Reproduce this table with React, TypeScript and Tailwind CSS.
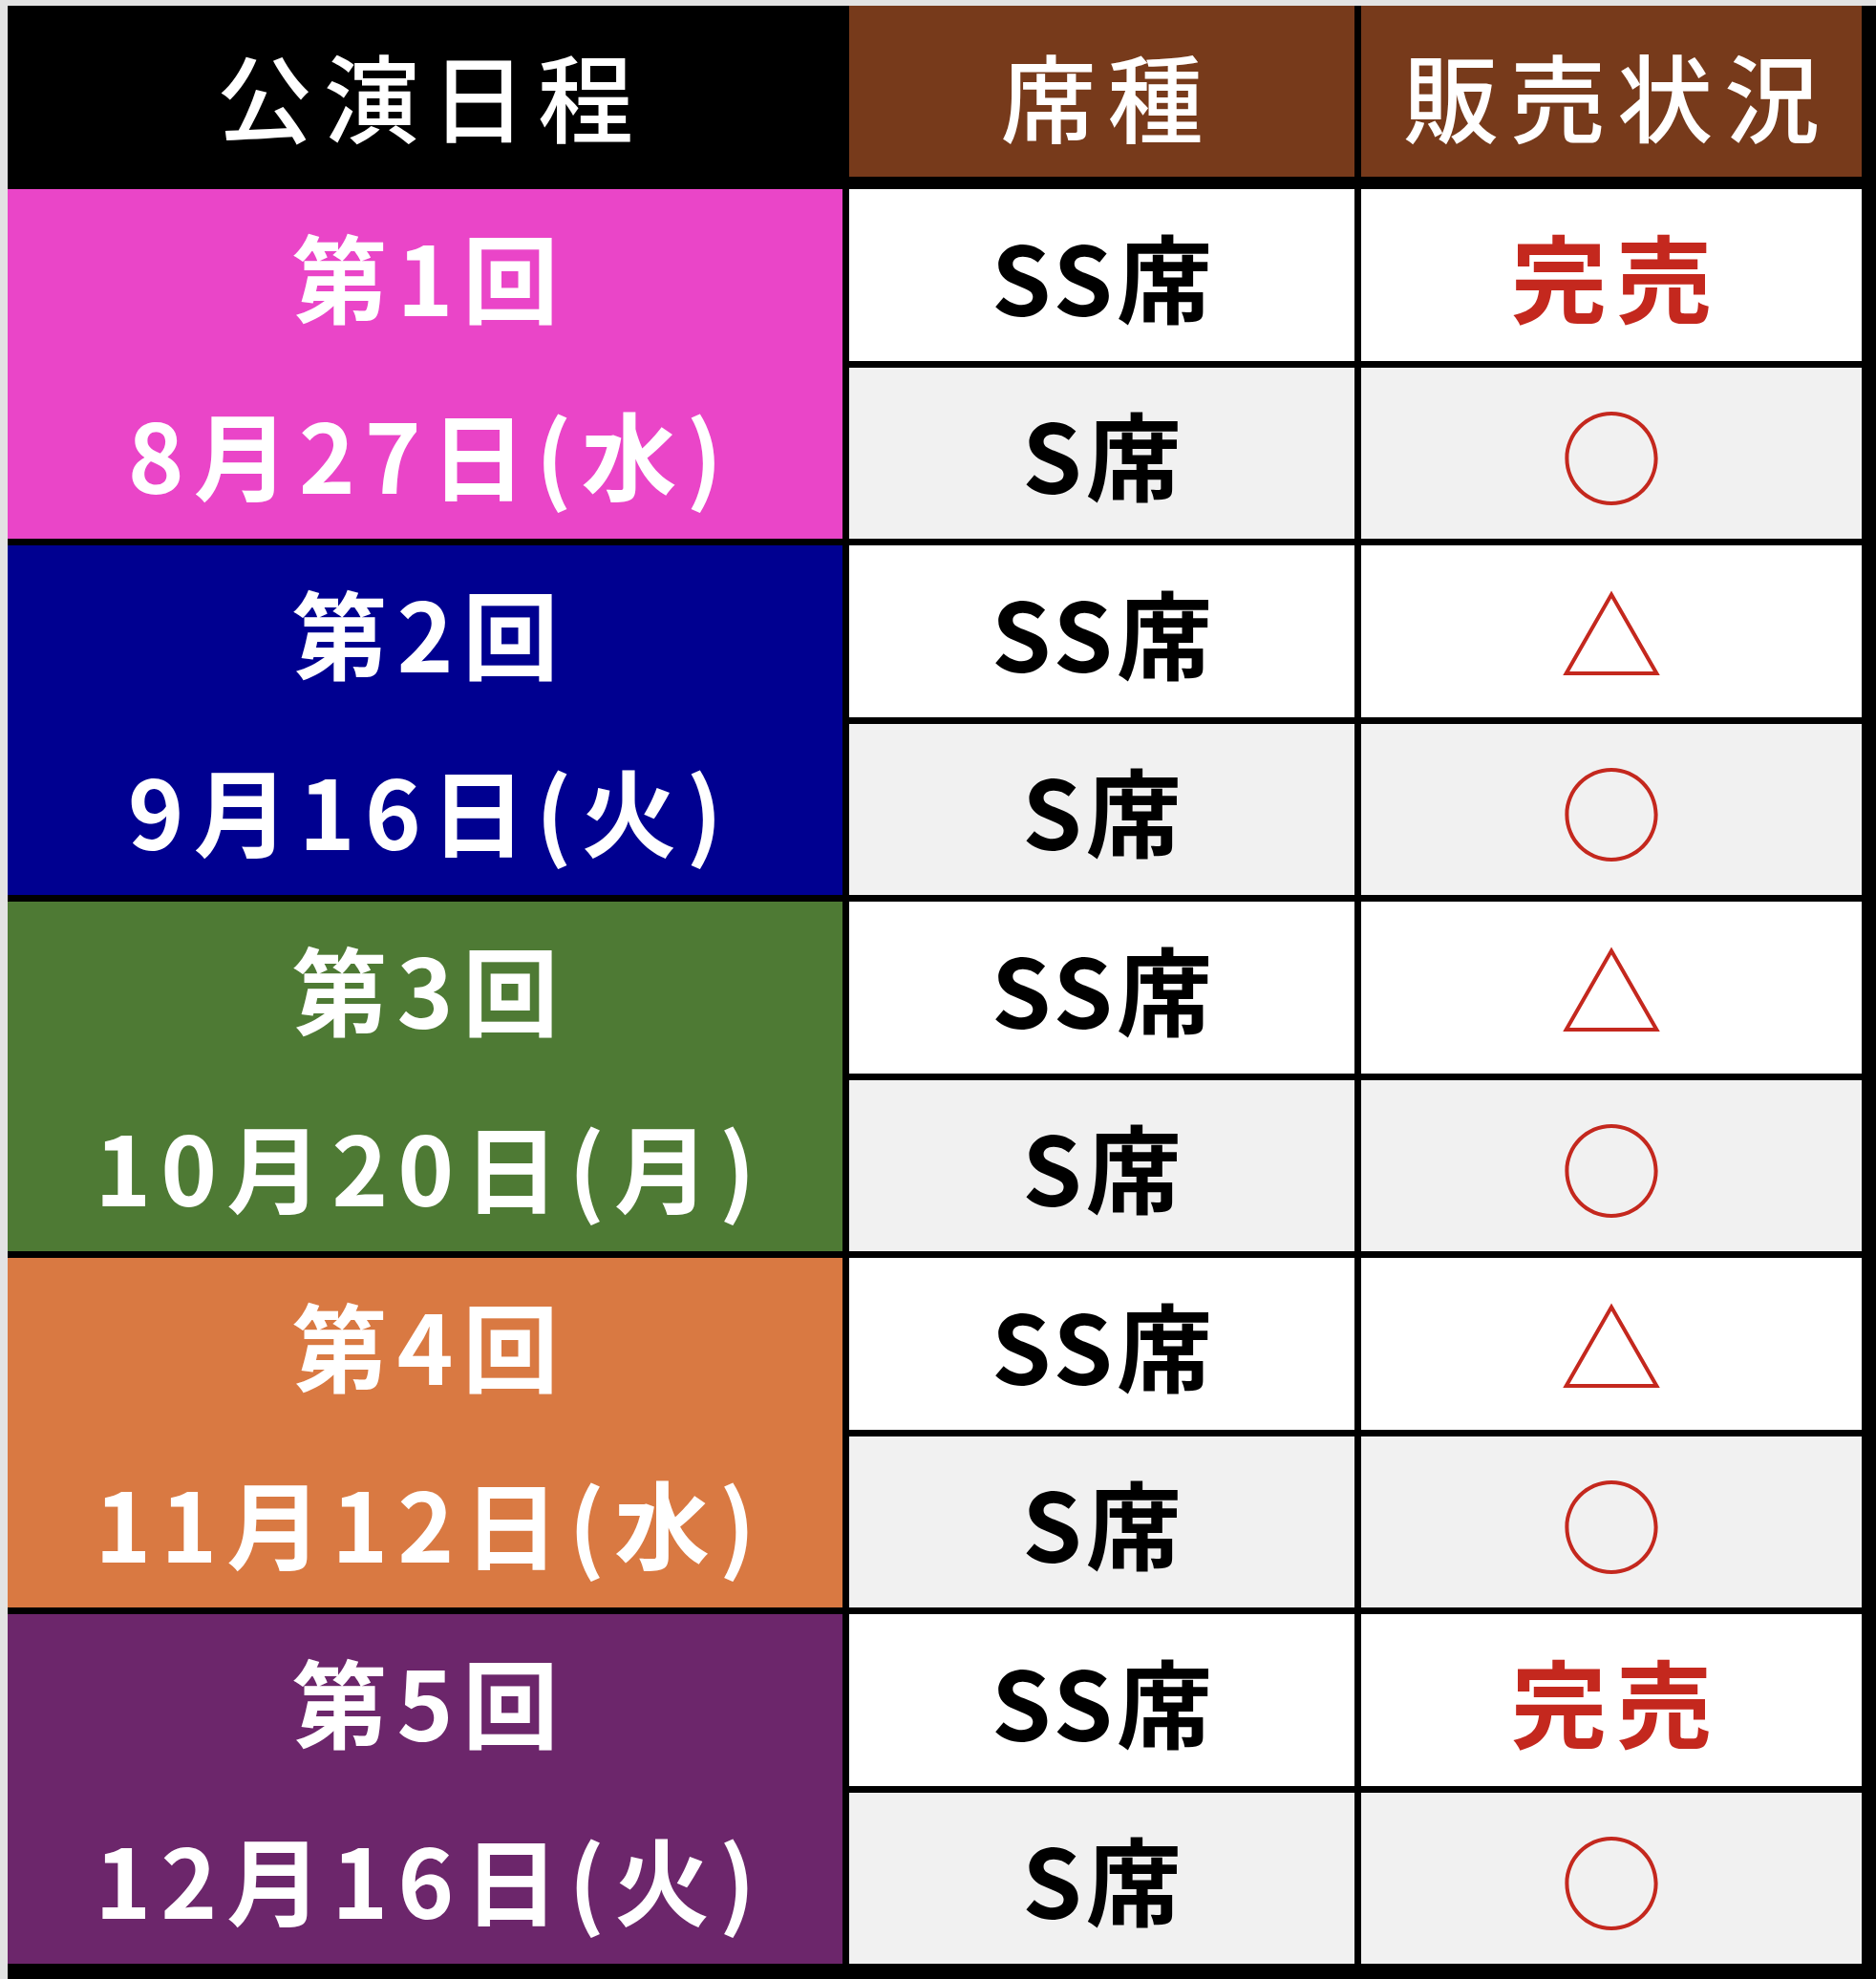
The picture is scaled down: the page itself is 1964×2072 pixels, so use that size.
import React from "react";

type Group = { no: string; date: string; bg: string; ss: "完売" | "△" | "○"; s: "完売" | "△" | "○" };

const groups: Group[] = [
  { no: "第1回", date: "8月27日(水)", bg: "bg-[#ea45c8]", ss: "完売", s: "○" },
  { no: "第2回", date: "9月16日(火)", bg: "bg-[#000090]", ss: "△", s: "○" },
  { no: "第3回", date: "10月20日(月)", bg: "bg-[#4e7a34]", ss: "△", s: "○" },
  { no: "第4回", date: "11月12日(水)", bg: "bg-[#d97942]", ss: "△", s: "○" },
  { no: "第5回", date: "12月16日(火)", bg: "bg-[#6c266b]", ss: "完売", s: "○" },
];

const font = "font-['Noto_Sans_CJK_JP','Noto_Sans',sans-serif]";

function Status({ v }: { v: string }) {
  if (v === "完売") {
    return <span className="text-[100px] leading-none font-bold tracking-[10px] pl-[10px] text-[#c4281e]">完売</span>;
  }
  return <span className="text-[108px] leading-none font-normal text-[#c4281e]">{v}</span>;
}

export default function App() {
  return (
    <div className={`w-[1964px] h-[2072px] bg-[#e3e3e3] pl-[8px] pt-[6px] ${font}`}>
      <div className="w-full h-full bg-black">
        <div className="grid grid-cols-[874px_529px_524px] gap-x-[7px] h-[179px]">
          <div className="bg-black flex items-center justify-center pt-[6px]">
            <span className="text-white text-[100px] leading-none font-medium tracking-[12px] pl-[12px]">公演日程</span>
          </div>
          <div className="bg-[#773a1b] flex items-center justify-center pt-[6px]">
            <span className="text-white text-[100px] leading-none font-medium tracking-[12px] pl-[12px]">席種</span>
          </div>
          <div className="bg-[#773a1b] flex items-center justify-center pt-[6px]">
            <span className="text-white text-[100px] leading-none font-medium tracking-[12px] pl-[12px]">販売状況</span>
          </div>
        </div>
        <div className="mt-[13px] grid grid-cols-[874px_529px_524px] grid-rows-[repeat(10,minmax(0,1fr))] gap-x-[7px] gap-y-[7px] h-[1858px]">
          {groups.map((g) => (
            <React.Fragment key={g.no}>
              <div className={`${g.bg} row-span-2 grid grid-rows-2 gap-y-[7px]`}>
                <div className="flex items-center justify-center">
                  <span className="text-white text-[100px] leading-none font-bold tracking-[10px] pl-[10px]">{g.no}</span>
                </div>
                <div className="flex items-center justify-center">
                  <span className="text-white text-[100px] leading-none font-bold tracking-[10px] pl-[10px]">{g.date}</span>
                </div>
              </div>
              <div className="bg-white flex items-center justify-center">
                <span className="text-black text-[100px] leading-none font-bold tracking-[4px] pl-[4px]">SS席</span>
              </div>
              <div className="bg-white flex items-center justify-center">
                <Status v={g.ss} />
              </div>
              <div className="bg-[#f1f1f1] flex items-center justify-center">
                <span className="text-black text-[100px] leading-none font-bold tracking-[4px] pl-[4px]">S席</span>
              </div>
              <div className="bg-[#f1f1f1] flex items-center justify-center">
                <Status v={g.s} />
              </div>
            </React.Fragment>
          ))}
        </div>
      </div>
    </div>
  );
}
